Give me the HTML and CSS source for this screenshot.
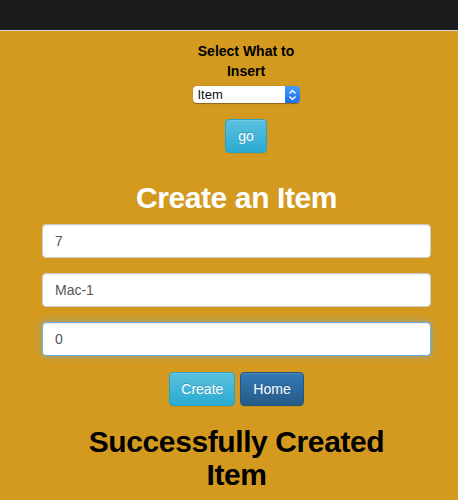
FILE: index.html
```html
<!DOCTYPE html>
<html>
<head>
<meta charset="utf-8">
<link rel="stylesheet" href="styles.css">
</head>
<body>
<div class="navbar"></div>
<div class="chooser">
  <div class="chooser-label">Select What to Insert</div>
  <div class="select">
    <span class="select-text">Item</span>
    <span class="select-arrows">
      <svg width="9" height="12" viewBox="0 0 9 12"><path d="M1.5 4.5 L4.5 1.5 L7.5 4.5 M1.5 7.5 L4.5 10.5 L7.5 7.5" fill="none" stroke="#fff" stroke-width="1.4"/></svg>
    </span>
  </div>
  <button class="btn btn-info go">go</button>
</div>
<div class="form">
  <h2 class="title">Create an Item</h2>
  <div class="field">7</div>
  <div class="field">Mac-1</div>
  <div class="field focus">0</div>
  <div class="actions">
    <button class="btn btn-info create">Create</button>
    <button class="btn btn-primary">Home</button>
  </div>
  <h2 class="success">Successfully Created Item</h2>
</div>
</body>
</html>
```
FILE: styles.css
```css
html, body {
  margin: 0;
  padding: 0;
  background: #d49a1f;
  font-family: "Liberation Sans", Arial, sans-serif;
  font-size: 14px;
  color: #000;
}
.navbar {
  height: 30px;
  background: #1b1b1b;
  border-bottom: 1px solid #d8d8d8;
}
.chooser {
  display: flex;
  flex-direction: column;
  align-items: center;
  padding-left: 34px;
  padding-top: 10px;
}
.chooser-label {
  width: 120px;
  text-align: center;
  font-weight: bold;
  font-size: 14px;
  line-height: 20px;
}
.select {
  margin-top: 5px;
  width: 107px;
  height: 17px;
  background: #fff;
  border-radius: 4px;
  display: flex;
  align-items: center;
  box-shadow: 0 0.5px 1px rgba(0,0,0,0.35);
  overflow: hidden;
}
.select-text {
  flex: 1;
  padding-left: 5px;
  font-size: 13px;
  color: #111;
}
.select-arrows {
  width: 15px;
  height: 17px;
  background: linear-gradient(to bottom, #4b9af7, #1a6ff0);
  display: flex;
  align-items: center;
  justify-content: center;
}
.btn {
  font-family: "Liberation Sans", Arial, sans-serif;
  font-size: 14px;
  line-height: 20px;
  padding: 6px 12px;
  border-radius: 4px;
  border: 1px solid transparent;
  color: #fff;
  text-shadow: 0 -1px 0 rgba(0,0,0,0.2);
  box-shadow: inset 0 1px 0 rgba(255,255,255,0.15), 0 1px 1px rgba(0,0,0,0.075);
  cursor: pointer;
}
.btn-info {
  background: linear-gradient(to bottom, #5bc0de 0, #2aabd2 100%);
  border-color: #28a4c9;
}
.btn-primary {
  background: linear-gradient(to bottom, #337ab7 0, #265a88 100%);
  border-color: #245580;
}
.create {
  padding: 6px 11px;
}
.go {
  margin-top: 16px;
}
.form {
  padding: 0 27px 0 42px;
  display: flex;
  flex-direction: column;
  align-items: stretch;
}
.title, .success {
  font-size: 30px;
  line-height: 33px;
  font-weight: bold;
  letter-spacing: -0.4px;
  text-align: center;
  margin: 0;
}
.title {
  color: #fff;
  margin-top: 28px;
  margin-bottom: 10px;
}
.field {
  height: 20px;
  padding: 6px 12px;
  background: #fff;
  border: 1px solid #ccc;
  border-radius: 4px;
  color: #555;
  font-size: 14px;
  line-height: 20px;
  box-shadow: inset 0 1px 1px rgba(0,0,0,0.075);
  margin-bottom: 15px;
}
.field.focus {
  border-color: #66afe9;
  box-shadow: inset 0 1px 1px rgba(0,0,0,0.075), 0 0 8px rgba(102,175,233,0.6);
}
.actions {
  display: flex;
  justify-content: center;
  gap: 5px;
  margin-top: 1px;
}
.success {
  color: #000;
  margin: 19px auto 0;
  width: 320px;
}
```
